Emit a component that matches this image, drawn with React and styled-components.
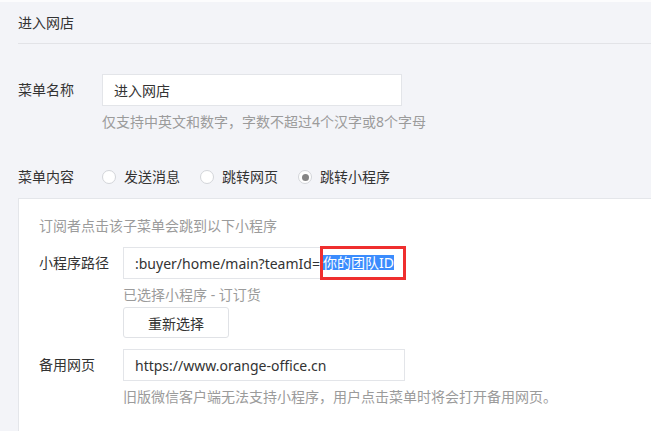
import React from "react";
import styled, { createGlobalStyle } from "styled-components";

const GlobalStyle = createGlobalStyle`
  html, body {
    margin: 0;
    padding: 0;
    background: #f3f4f8;
    overflow: hidden;
  }
  body {
    font-family: "Noto Sans", "Noto Sans CJK SC", sans-serif;
    font-size: 14px;
    color: #333;
  }
`;

const Page = styled.div`
  border-top: 2px solid #fcfcfd;
  padding-left: 18px;
  height: 429px;
  overflow: hidden;
`;

const Header = styled.div`
  padding: 11px 0 10px;
  line-height: 20px;
  border-bottom: 1px solid #e2e3e7;
  color: #333;
`;

const Row = styled.div`
  display: grid;
  grid-template-columns: 84px 1fr;
  align-items: center;
  margin-top: ${(p) => p.$top || 0}px;
`;

const Label = styled.div`
  line-height: 20px;
  color: #333;
  white-space: nowrap;
`;

const Field = styled.div`
  box-sizing: border-box;
  display: flex;
  align-items: center;
  width: ${(p) => p.$width}px;
  height: 32px;
  padding-left: 11px;
  background: #fff;
  border: 1px solid #e3e5e9;
  color: #333;
  white-space: nowrap;
`;

const Hint = styled.div`
  margin: ${(p) => p.$top || 6}px 0 0 84px;
  line-height: 20px;
  color: #9b9b9b;
  white-space: nowrap;
`;

const Radios = styled.div`
  display: flex;
  align-items: center;
  gap: 20px;
`;

const RadioItem = styled.label`
  display: flex;
  align-items: center;
  gap: 8px;
  line-height: 20px;
`;

const Circle = styled.span`
  box-sizing: border-box;
  width: 14px;
  height: 14px;
  border-radius: 50%;
  border: 1px solid #d3d5d9;
  background: #fff;
  display: flex;
  align-items: center;
  justify-content: center;

  &::after {
    content: "";
    width: 7px;
    height: 7px;
    border-radius: 50%;
    background: ${(p) => (p.$checked ? "#858585" : "transparent")};
  }
`;

const Panel = styled.div`
  margin-top: 11px;
  background: #fff;
  border: 1px solid #e4e6ea;
  border-right: none;
  padding: 17px 0 60px 20px;
`;

const Intro = styled.div`
  line-height: 20px;
  color: #9b9b9b;
`;

const Marker = styled.span`
  display: inline-flex;
  align-items: center;
  padding: 6px 9px 7px 0;
  border: 3px solid #ef2f2f;
  position: relative;
  z-index: 1;
`;

const Selected = styled.span`
  background: #3b8cfd;
  color: #fff;
  line-height: 15px;
`;

const Button = styled.button`
  margin: 2px 0 0 84px;
  width: 106px;
  height: 31px;
  background: #fff;
  border: 1px solid #e0e2e6;
  border-radius: 3px;
  font: inherit;
  color: #333;
`;

const options = [
  { text: "发送消息", checked: false },
  { text: "跳转网页", checked: false },
  { text: "跳转小程序", checked: true },
];

export default function App() {
  return (
    <>
      <GlobalStyle />
      <Page>
        <Header>进入网店</Header>

        <Row $top={30}>
          <Label>菜单名称</Label>
          <Field $width={300}>进入网店</Field>
        </Row>
        <Hint>仅支持中英文和数字，字数不超过4个汉字或8个字母</Hint>

        <Row $top={35}>
          <Label>菜单内容</Label>
          <Radios>
            {options.map((o) => (
              <RadioItem key={o.text}>
                <Circle $checked={o.checked} />
                {o.text}
              </RadioItem>
            ))}
          </Radios>
        </Row>

        <Panel>
          <Intro>订阅者点击该子菜单会跳到以下小程序</Intro>
          <Row $top={11}>
            <Label>小程序路径</Label>
            <Field $width={282}>
              :buyer/home/main?teamId=
              <Marker>
                <Selected>你的团队ID</Selected>
              </Marker>
            </Field>
          </Row>
          <Hint>已选择小程序 - 订订货</Hint>
          <Button>重新选择</Button>

          <Row $top={11}>
            <Label>备用网页</Label>
            <Field $width={282}>https://www.orange-office.cn</Field>
          </Row>
          <Hint>旧版微信客户端无法支持小程序，用户点击菜单时将会打开备用网页。</Hint>
        </Panel>
      </Page>
    </>
  );
}
